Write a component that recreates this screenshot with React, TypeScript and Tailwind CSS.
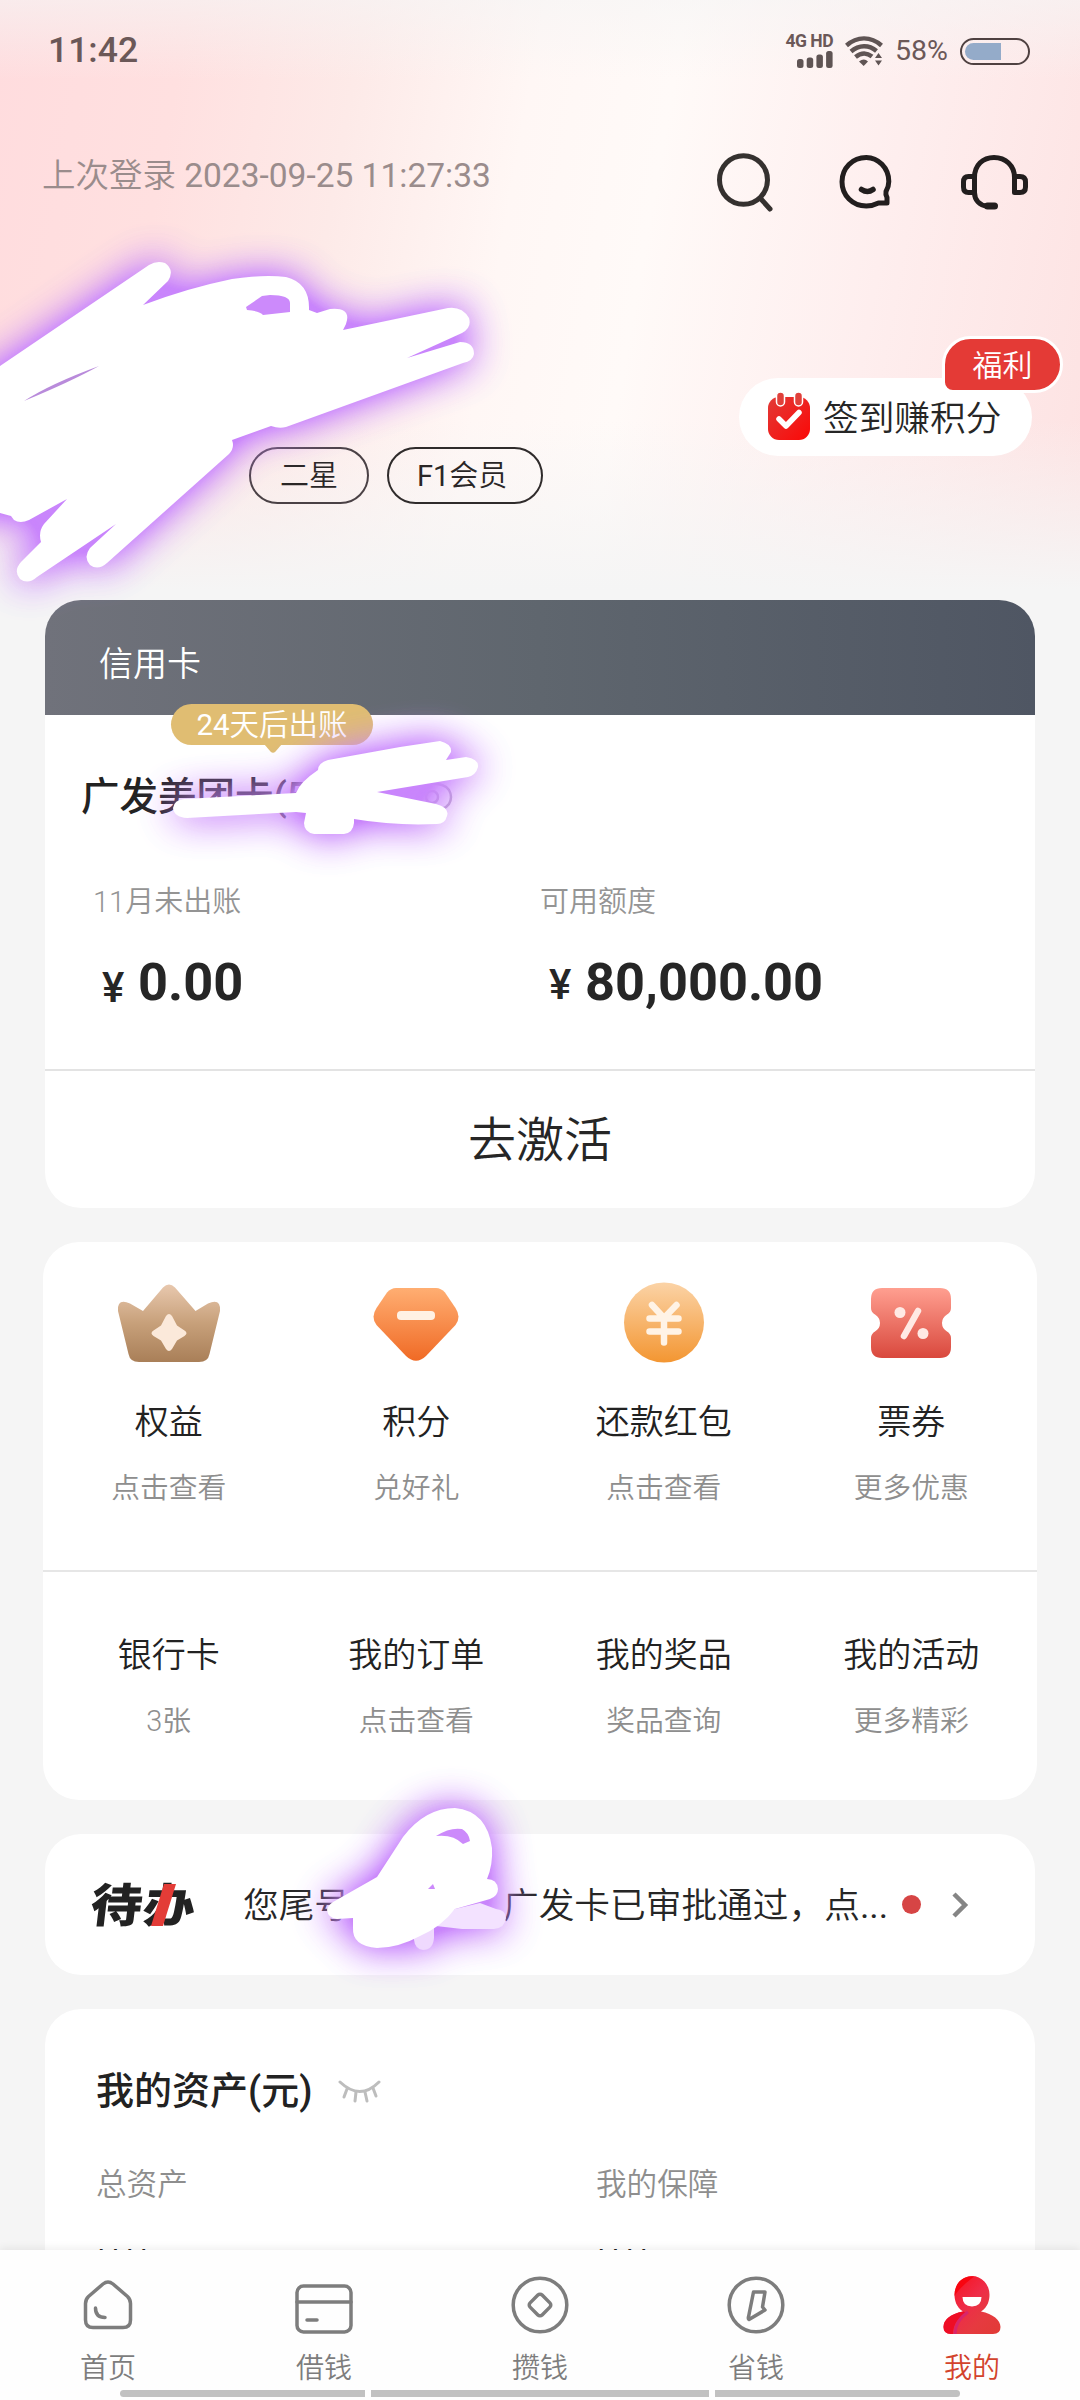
import type { ReactNode } from "react";
import clsx from "clsx";

type Entry = {
  title: string;
  sub: string;
  icon?: ReactNode;
};

function StatusBar() {
  return (
    <div className="flex h-[100px] items-center justify-between pl-[48px] pr-[50px] pt-[2px] text-[#6b5858]">
      <span className="text-[35.500px] font-medium leading-none">11:42</span>
      <div className="flex items-center">
        <div className="flex w-12 flex-col items-end">
          <span className="text-[17.500px] font-bold leading-[14px] tracking-[-0.5px] whitespace-nowrap">
            4G HD
          </span>
          <svg width="36" height="18" viewBox="0 0 36 18" className="mt-0.5">
            <g fill="#5f5454">
              <rect x="0" y="9" width="6.5" height="9" rx="2.5" />
              <rect x="9.7" y="7.5" width="6.5" height="10.5" rx="2.5" />
              <rect x="19.4" y="4.5" width="6.5" height="13.5" rx="2.5" />
              <rect x="29.1" y="1" width="6.5" height="17" rx="2.5" />
            </g>
          </svg>
        </div>
        <svg width="38" height="30" viewBox="0 0 38 30" className="ml-3">
          <g fill="none" stroke="#5f5454" strokeWidth="4.400">
            <path d="M1.5 9.5C12 0 26 0 36.500 9.500" />
            <path d="M6 15.500C14 8.500 24 8.500 31.500 15" />
            <path d="M10.500 21C16 16.500 22 16.500 27 20.500" />
          </g>
          <path d="M14 25.500q5-4 9 0L18.700 30z" fill="#5f5454" />
          <path d="M30 22l3.500-5 3.500 5zM30 24.500l3.500 5 3.500-5z" fill="#5f5454" />
        </svg>
        <span className="ml-3 text-[28.500px] font-normal leading-none">58%</span>
        <div className="ml-3 h-[27px] w-[70px] rounded-full border-2 border-[#4f4141] p-[3px]">
          <div className="h-[17px] w-9 rounded-l-full bg-[#94abc9]" />
        </div>
      </div>
    </div>
  );
}

function HeaderActions() {
  return (
    <div className="flex items-center">
      <svg width="60" height="64" viewBox="0 -2 60 64" fill="none" stroke="#35312f" strokeWidth="5" strokeLinecap="round">
        <ellipse cx="30.500" cy="30" rx="24" ry="24.300" />
        <path d="M47.500 48.500L57 59" />
      </svg>
      <svg width="60" height="60" viewBox="0 0 60 60" className="ml-[64px]" fill="none" stroke="#221e1e" strokeWidth="5" strokeLinecap="round" strokeLinejoin="round">
        <path d="M49 41.500C51 38 51.800 35 51.800 31.500C51.800 17.800 41 7.500 29.300 7.500C15.500 7.500 5 18 5 31.800C5 45.500 15.500 56 29.300 56C33.500 56 37.500 55 41.500 53L50 53L50 47.500C49 46 48.500 44 49 41.500Z" />
        <path d="M24.500 39.500Q30.500 43.500 36 39.500" strokeWidth="5.500" />
      </svg>
      <svg width="70" height="60" viewBox="0 0 70 60" className="ml-[63px]" fill="none" stroke="#221e1e" strokeWidth="5" strokeLinecap="round" strokeLinejoin="round">
        <path d="M14.500 27.500C14.500 15 23 7.500 34 7.500C45.500 7.500 54.500 15.500 54.500 27.500" />
        <path d="M14.500 26.500H8.500Q3.500 26.500 3.500 32V37Q3.500 42.500 8.500 42.500H14.500Z" />
        <path d="M54.500 26.500H60Q65.500 26.500 65.500 32V37Q65.500 42.500 60 42.500H54.500Z" />
        <path d="M14.500 42.500C14.500 50 19.500 55.500 27 56" />
        <path d="M27.500 56H34.500" strokeWidth="7" />
      </svg>
    </div>
  );
}

function SignInPill() {
  return (
    <div className="relative flex h-[78px] w-[293px] items-center rounded-full bg-white pl-[29px]">
      <svg width="43" height="50" viewBox="0 0 43 50" className="mb-0.5">
        <defs>
          <linearGradient id="calendar" x1="0" y1="0" x2="1" y2="1">
            <stop offset="0" stopColor="#e23a36" />
            <stop offset="1" stopColor="#fb0807" />
          </linearGradient>
        </defs>
        <rect x="0" y="6" width="42" height="43" rx="11" fill="url(#calendar)" />
        <rect x="8.500" y="1" width="8" height="14" rx="4" fill="#e0403a" stroke="#fff" strokeWidth="1.500" />
        <rect x="26.500" y="1" width="8" height="14" rx="4" fill="#e0403a" stroke="#fff" strokeWidth="1.500" />
        <path d="M11 28L18 35L31 21.500" fill="none" stroke="#fff" strokeWidth="5.500" strokeLinecap="round" strokeLinejoin="round" />
      </svg>
      <span className="ml-3 pt-[5px] text-[35.700px] leading-none text-[#262626] whitespace-nowrap">
        签到赚积分
      </span>
      <span className="absolute -top-[42px] left-[203px] flex h-[57px] w-[121px] items-center justify-center rounded-[29px] rounded-bl-[11px] border-[3px] border-white bg-[#e43a36] pt-[2px] text-[30px] leading-none text-white">
        福利
      </span>
    </div>
  );
}

function Amount({ value, className }: { value: string; className?: string }) {
  return (
    <div className="flex items-start font-bold text-[#262626]">
      <span className={clsx("w-[36px] text-[42px] leading-none font-medium", className)}>
        ¥
      </span>
      <span className="text-[52.300px] leading-none">{value}</span>
    </div>
  );
}

function CreditCard() {
  return (
    <section className="mx-[45px] h-[608px] shrink-0 overflow-hidden rounded-[36px] bg-white">
      <div className="flex h-[115px] items-center bg-linear-to-r from-[#70727b] via-[#5f666e] to-[#4f5663] pl-[54px] pt-[12px] text-[34px] leading-none text-white">
        信用卡
      </div>
      <div className="relative h-[356px] border-b-2 border-[#e3e3e3]">
        <div className="absolute -top-[11px] left-[126px] flex h-[41px] w-[202px] items-center justify-center rounded-full bg-[#e0bd72] pt-[2px] text-[29.500px] leading-none text-white">
          <span className="font-normal">24</span>天后出账
          <svg width="18" height="10" viewBox="0 0 18 10" className="absolute top-10 left-[93px]">
            <path d="M0 0h18L11.500 7.500Q9 10 6.500 7.500z" fill="#e0bd72" />
          </svg>
        </div>
        <div className="flex items-center pl-[36px] pt-[63px]">
          <h2 className="text-[38.500px] font-medium leading-none text-[#222]">
            广发美团卡(5
          </h2>
          <svg width="42" height="30" viewBox="0 0 42 30" className="ml-[102px]" fill="none" stroke="#b9a8c6" strokeWidth="2.500">
            <path d="M1 15C10-1 32-1 38 8Q42 15 38 22C32 31 10 31 1 15z" />
            <circle cx="21" cy="15" r="6" />
          </svg>
        </div>
        <div className="mt-[71px] flex pl-[48px] text-[29px] leading-none text-[#949494]">
          <span className="w-[447px]">11月未出账</span>
          <span>可用额度</span>
        </div>
        <div className="mt-[39px] flex pl-[57px]">
          <div className="w-[447px]">
            <Amount value="0.00" className="pt-[11px]" />
          </div>
          <Amount value="80,000.00" className="pt-[8px]" />
        </div>
      </div>
      <div className="flex h-[137px] items-center justify-center pt-[3px] text-[48px] leading-none text-[#262626]">
        去激活
      </div>
    </section>
  );
}

const CrownIcon = (
  <svg width="104" height="84" viewBox="0 0 104 84">
    <defs>
      <linearGradient id="crown" x1="0" y1="0" x2="0" y2="1">
        <stop offset="0" stopColor="#e8c8ae" />
        <stop offset="0.500" stopColor="#c7a07a" />
        <stop offset="1" stopColor="#a97f58" />
      </linearGradient>
    </defs>
    <path d="M46 8.500Q52 2.500 58 8.500L78.500 32L91 24.500Q104 19 103 32L92.500 75Q91 83 82 83H22Q13 83 11.500 75L1 32Q0 19 13 24.500L26 32Z" fill="url(#crown)" />
    <path d="M49 37Q52 33 55 37L60 46.500L67.500 51.500Q71.500 54 67.500 57L60 61.500L55 70Q52 74 49 70L44 61.500L36.500 57Q32.500 54 36.500 51.500L44 46.500Z" fill="#fbe9da" />
  </svg>
);

const GemIcon = (
  <svg width="88" height="84" viewBox="0 0 88 84">
    <defs>
      <linearGradient id="gem" x1="0" y1="0" x2="0" y2="1">
        <stop offset="0" stopColor="#ffae72" />
        <stop offset="1" stopColor="#f06a25" />
      </linearGradient>
    </defs>
    <path d="M24 9H64Q69 9 73 13.500L83.500 29Q89.500 38 83.500 46L54 77Q44 86.500 34 77L4.500 46Q-1.500 38 4.500 29L15 13.500Q19 9 24 9Z" fill="url(#gem)" />
    <rect x="25" y="32" width="38" height="9" rx="4" fill="#fff1e4" />
  </svg>
);

const CoinIcon = (
  <svg width="82" height="84" viewBox="0 0 82 84">
    <defs>
      <linearGradient id="coin" x1="0" y1="0" x2="0" y2="1">
        <stop offset="0" stopColor="#fbd3a6" />
        <stop offset="1" stopColor="#f39632" />
      </linearGradient>
    </defs>
    <circle cx="41" cy="43.500" r="40" fill="url(#coin)" />
    <path d="M29 26L41 39L53.500 26M26.500 39.500H55.500M26.500 52.500H55.500M41 39V63.500" fill="none" stroke="#fff3e6" strokeWidth="6.500" strokeLinecap="round" strokeLinejoin="round" />
  </svg>
);

const TicketIcon = (
  <svg width="82" height="84" viewBox="0 0 82 84">
    <defs>
      <linearGradient id="ticket" x1="0" y1="0" x2="0" y2="1">
        <stop offset="0" stopColor="#ff9f90" />
        <stop offset="1" stopColor="#d9483d" />
      </linearGradient>
    </defs>
    <path d="M12 9H70Q81 9 81 20V29Q81 33 77 35.500Q72 38.500 72 44Q72 49.500 77 52.500Q81 55 81 59V68Q81 79 70 79H12Q1 79 1 68V59Q1 55 5 52.500Q10 49.500 10 44Q10 38.500 5 35.500Q1 33 1 29V20Q1 9 12 9Z" fill="url(#ticket)" />
    <path d="M48 32L34 57" stroke="#ffe9e4" strokeWidth="6.500" strokeLinecap="round" />
    <circle cx="30" cy="33.500" r="5.500" fill="#ffe9e4" />
    <circle cx="53" cy="54.500" r="5.500" fill="#ffe9e4" />
  </svg>
);

const benefits: Entry[] = [
  { title: "权益", sub: "点击查看", icon: CrownIcon },
  { title: "积分", sub: "兑好礼", icon: GemIcon },
  { title: "还款红包", sub: "点击查看", icon: CoinIcon },
  { title: "票券", sub: "更多优惠", icon: TicketIcon },
];

const services: Entry[] = [
  { title: "银行卡", sub: "3张" },
  { title: "我的订单", sub: "点击查看" },
  { title: "我的奖品", sub: "奖品查询" },
  { title: "我的活动", sub: "更多精彩" },
];

function EntryCell({ entry }: { entry: Entry }) {
  return (
    <div className="flex flex-col items-center">
      {entry.icon && <div className="mb-[42px] h-[84px]">{entry.icon}</div>}
      <span className="text-[34px] leading-none text-[#222]">{entry.title}</span>
      <span className="mt-[35px] text-[28.800px] leading-none text-[#8e8e8e]">
        {entry.sub}
      </span>
    </div>
  );
}

function EntryGrid() {
  return (
    <section className="mx-[43px] mt-[34px] h-[558px] shrink-0 rounded-[36px] bg-white">
      <div className="grid h-[330px] grid-cols-4 border-b-2 border-[#e6e6e6] px-[2px] pt-[37px]">
        {benefits.map((entry) => (
          <EntryCell key={entry.title} entry={entry} />
        ))}
      </div>
      <div className="grid grid-cols-4 px-[2px] pt-[66px]">
        {services.map((entry) => (
          <EntryCell key={entry.title} entry={entry} />
        ))}
      </div>
    </section>
  );
}

function TodoCard() {
  return (
    <section className="mx-[45px] mt-[34px] flex h-[141px] shrink-0 items-center rounded-[36px] bg-white pl-[46px] pr-[66px]">
      <div className="relative w-[106px] pt-[3px] text-[46px] font-black leading-none text-[#222] whitespace-nowrap">
        <span className="inline-block origin-left scale-x-[1.12] -skew-x-6 tracking-[1px]">
          待办
        </span>
        <svg width="28" height="42" viewBox="0 0 28 42" className="absolute top-[4px] left-[60px]">
          <path d="M13 0H25L12 42H0Z" fill="#e33c37" />
        </svg>
      </div>
      <div className="ml-[46px] flex flex-1 pt-[4px] text-[35.700px] leading-none text-[#262626] whitespace-nowrap">
        <span className="w-[260px]">您尾号</span>
        <span>
          广发卡已审批通过，点<span className="font-normal">...</span>
        </span>
      </div>
      <span className="size-[19px] rounded-full bg-[#d64545]" />
      <svg width="18" height="28" viewBox="0 0 18 28" className="ml-[30px]" fill="none" stroke="#858585" strokeWidth="4.500">
        <path d="M3 3L14 14L3 25" />
      </svg>
    </section>
  );
}

function AssetsCard() {
  return (
    <section className="mx-[45px] mt-[34px] h-[360px] shrink-0 rounded-[36px] bg-white pl-[51px] pt-[63px]">
      <div className="flex items-center">
        <h2 className="text-[38px] font-medium leading-none text-[#222]">
          我的资产(元)
        </h2>
        <svg width="44" height="24" viewBox="0 0 44 24" className="ml-[26px]" fill="none" stroke="#bdbdbd" strokeWidth="3" strokeLinecap="round">
          <path d="M2 3Q22 22 41 3" />
          <path d="M9 10L6 18M18 13L17 22M27 13L29 22M35 9L38 17" />
        </svg>
      </div>
      <div className="mt-[60px] flex text-[30.600px] leading-none text-[#8e8e8e]">
        <span className="w-[500px]">总资产</span>
        <span>我的保障</span>
      </div>
      <div className="mt-[43px] -ml-[2px] flex text-[32px] font-medium leading-none text-[#222]">
        <span className="w-[500px]">****</span>
        <span>****</span>
      </div>
    </section>
  );
}

const tabs = [
  {
    label: "首页",
    icon: (
      <svg width="58" height="58" viewBox="0 0 58 58" fill="none" stroke="#7d7d7d" strokeWidth="3.500" strokeLinecap="round" strokeLinejoin="round">
        <path d="M24 8Q29 4 34 8L48.500 20.500Q51.500 23.500 51.500 27.500V44Q51.500 51.500 44 51.500H14Q6.500 51.500 6.500 44V27.500Q6.500 23.500 9.500 20.500Z" />
        <path d="M16.500 32Q16.500 41.500 26 41.500" />
      </svg>
    ),
  },
  {
    label: "借钱",
    icon: (
      <svg width="58" height="58" viewBox="0 0 58 58" fill="none" stroke="#7d7d7d" strokeWidth="3.500" strokeLinecap="round">
        <rect x="2" y="10" width="54" height="46" rx="6.500" />
        <path d="M2 26H56M12 44H22" />
      </svg>
    ),
  },
  {
    label: "攒钱",
    icon: (
      <svg width="58" height="58" viewBox="0 0 58 58" fill="none" stroke="#7d7d7d" strokeWidth="3.500" strokeLinejoin="round">
        <circle cx="29" cy="29" r="26.800" />
        <rect x="20.500" y="20.500" width="17" height="17" rx="3" transform="rotate(45 29 29)" />
      </svg>
    ),
  },
  {
    label: "省钱",
    icon: (
      <svg width="58" height="58" viewBox="0 0 58 58" fill="none" stroke="#7d7d7d" strokeWidth="3.500" strokeLinejoin="round">
        <circle cx="29" cy="29" r="26.800" />
        <path d="M26.500 16H38L35.500 31L38 34L22 43.500Q21 43 21.500 41Z" />
      </svg>
    ),
  },
  {
    label: "我的",
    icon: (
      <svg width="58" height="58" viewBox="0 0 58 58">
        <defs>
          <linearGradient id="mine" x1="0" y1="0" x2="1" y2="1">
            <stop offset="0" stopColor="#fb0a12" />
            <stop offset="0.450" stopColor="#ee2c48" />
            <stop offset="0.700" stopColor="#e63a40" />
            <stop offset="1" stopColor="#e13b36" />
          </linearGradient>
        </defs>
        <path d="M20 35.500C13 31 11.500 24 11.500 18.500A17.500 18.500 0 0 1 46.500 18.500C46.500 24 45 31 38 35.500C50 38 57.500 44 57.500 51Q57.500 58 50 58H8Q0.500 58 0.500 51C0.500 44 8 38 20 35.500Z" fill="url(#mine)" />
        <path d="M11.500 20Q12 0 31 0.500Q16 12 11.500 20Z" fill="#f80510" />
        <path d="M20 35.500Q0.500 39.500 0.500 51Q0.500 58 8 58H10Q10 44 24 37Z" fill="#ee0d25" />
        <path d="M12 58Q12 45 25 36" fill="none" stroke="#d9256b" strokeWidth="3" />
        <path d="M19.500 21H38.500Q38.500 30 29 30.500Q19.500 30 19.500 21Z" fill="#fff" />
      </svg>
    ),
  },
];

function TabBar() {
  return (
    <nav className="relative h-[150px] shrink-0 bg-[#fefefe] shadow-[0_-2px_8px_rgba(0,0,0,0.07)]">
      <div className="grid grid-cols-5 pt-[26px]">
        {tabs.map((tab) => (
          <div key={tab.label} className="flex flex-col items-center">
            {tab.icon}
            <span
              className={clsx(
                "mt-[21px] text-[28px] leading-none",
                tab.label === "我的" ? "text-[#d3432c]" : "text-[#7d7d7d]"
              )}
            >
              {tab.label}
            </span>
          </div>
        ))}
      </div>
      {/* gesture hint bars */}
      <div className="absolute bottom-[3px] left-[120px] flex h-[7px] gap-[6px]">
        <span className="w-[245px] rounded-l-full bg-[#c1c1c1]" />
        <span className="w-[338px] bg-[#c1c1c1]" />
        <span className="w-[245px] rounded-r-full bg-[#c1c1c1]" />
      </div>
    </nav>
  );
}

// Brush marks that hide the private parts of the page
function BrushMarks() {
  return (
    <svg width="1080" height="2400" viewBox="0 0 1080 2400" className="pointer-events-none absolute top-0 left-0">
      <defs>
        <filter id="glow" filterUnits="userSpaceOnUse" x="-100" y="100" width="1100" height="2000" colorInterpolationFilters="sRGB">
          <feGaussianBlur in="SourceAlpha" stdDeviation="20" result="soft" />
          <feFlood floodColor="#c985fc" />
          <feComposite in2="soft" operator="in" result="halo" />
          <feComponentTransfer in="halo" result="strong">
            <feFuncA type="linear" slope="1.750" />
          </feComponentTransfer>
          <feMerge>
            <feMergeNode in="strong" />
            <feMergeNode in="SourceGraphic" />
          </feMerge>
        </filter>
      </defs>
      <g filter="url(#glow)" fill="#fff">
        <path d="M436 1926L455 1909L480 1903L496 1909Q506 1910 506 1918Q505 1928 494 1929H462Z" fill="#f3e2ff" />
        <path d="M414 1936L434 1925V1938Q433 1950 423 1950Q415 1949 414 1940Z" fill="#efd9fe" />
        <path d="M-60 405L0 366L149 265Q157 260 165 263Q175 270 168 281L143 305Q188 288 232 279Q265 274 286 277Q310 283 309 310L317 313L330 309Q352 307 346 324L343 330L448 308Q462 306 469 318Q472 328 462 333L407 358L460 342Q474 342 474 354Q473 361 463 363L286 427Q279 429 271 426L232 440Q235 448 229 454L107 563Q98 571 90 565Q83 557 90 548L116 524L37 577Q28 585 20 579Q13 571 21 562L41 542Q38 532 44 524L67 499L29 520Q20 524 14 520L11 516L0 513L-60 520Z" />
        <path d="M184 799L296 793Q300 782 318 770Q318 763 328 760L400 747L440 741Q452 744 451 752L446 760L466 757Q479 759 478 767Q476 775 468 777L377 792L436 804Q450 808 447 816Q445 824 437 824Q395 826 354 819L354 823Q353 833 344 834H314Q304 832 304 823L306 813L296 812L187 818Q174 817 173 808Q174 800 184 799Z" />
        <path d="M333 1902L377 1877L403 1837Q425 1808 455 1808Q487 1811 492 1848Q493 1865 487 1879Q497 1879 498 1889Q498 1896 490 1899L455 1909Q441 1927 420 1936Q398 1948 377 1948Q352 1946 353 1928V1918L337 1919Q328 1918 327 1910Q328 1905 333 1902Z" />
      </g>
      <g fill="#cc8afb">
        <path d="M247 310L246 307L262 296L270 295Q290 295 290 303V312L263 315Q260 311 247 310Z" />
        <path d="M24 401Q50 384 99 366Q70 382 24 401Z" fill="#b98bdb" />
        <path d="M436 1836Q450 1827 462 1829Q469 1833 470 1841L463 1844Q453 1834 436 1836Z" />
        <path d="M428 1889L433 1884L435 1889Z" />
      </g>
    </svg>
  );
}

export default function App() {
  return (
    <div
      lang="zh-CN"
      className="relative flex h-[2400px] w-[1080px] flex-col overflow-hidden bg-[#f5f5f5] font-[Roboto,'Noto_Sans_CJK_SC',sans-serif] font-[350]"
    >
      <main className="flex h-[2250px] shrink-0 flex-col overflow-hidden">
        <header className="h-[600px] shrink-0 bg-[linear-gradient(to_bottom,rgba(245,245,245,0.6)_0px,rgba(245,245,245,0)_80px,rgba(245,245,245,0)_420px,#f5f5f5_590px),linear-gradient(100deg,#ffdcde_0%,#ffe0e0_16%,#fdeae8_31%,#fff7f5_46%,#fffaf8_58%,#feeeee_78%,#fde2e2_100%)]">
          <StatusBar />
          <div className="flex h-[160px] items-center justify-between pl-[42px] pr-[50px]">
            <span className="pb-[9px] text-[33.500px] leading-none text-[#9a8c8c]">
              上次登录 <span className="font-normal">2023-09-25 11:27:33</span>
            </span>
            <HeaderActions />
          </div>
          <div className="flex items-start justify-between pl-[249px] pr-[48px] pt-[118px]">
            <div className="mt-[69px] flex gap-[18px] text-[29px] leading-none text-[#2a2626]">
              <span className="flex h-[57px] w-[120px] items-center justify-center rounded-full border-2 border-[#4a4145] pt-[2px]">
                二星
              </span>
              <span className="flex h-[57px] w-[156px] items-center rounded-full border-2 border-[#2f2b2b] pl-[28px] pt-[2px]">
                <span className="font-normal">F1</span>会员
              </span>
            </div>
            <SignInPill />
          </div>
        </header>
        <CreditCard />
        <EntryGrid />
        <TodoCard />
        <AssetsCard />
      </main>
      <TabBar />
      <BrushMarks />
    </div>
  );
}
